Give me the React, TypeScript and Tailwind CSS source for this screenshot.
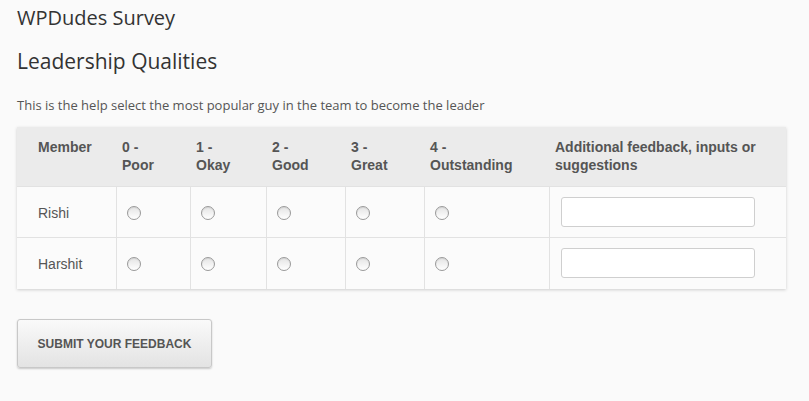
const members = ["Rishi", "Harshit"];
const ratings = [
  { n: "0 -", label: "Poor", w: "w-[74px]" },
  { n: "1 -", label: "Okay", w: "w-[76px]" },
  { n: "2 -", label: "Good", w: "w-[79px]" },
  { n: "3 -", label: "Great", w: "w-[79px]" },
  { n: "4 -", label: "Outstanding", w: "w-[125px]" },
];

function Radio() {
  return (
    <span className="block h-[14px] w-[14px] rounded-full border border-[#9a9a9a] bg-gradient-to-b from-[#e4e4e4] to-white shadow-[inset_0_1px_1px_rgba(0,0,0,0.08)]" />
  );
}

export default function App() {
  return (
    <div className="min-h-[401px] w-[809px] bg-[#fafafa] px-[17px] pt-[4px] font-['Open_Sans',sans-serif]">
      <h1 className="text-[20px] leading-[28px] text-[#333]">WPDudes Survey</h1>
      <h2 className="mt-[14px] text-[21px] leading-[30px] text-[#333]">Leadership Qualities</h2>
      <p className="mt-[20px] text-[13px] leading-[18px] text-[#555]">
        This is the help select the most popular guy in the team to become the leader
      </p>

      <div className="mt-[13px] w-[769px] shadow-[0_1px_3px_rgba(0,0,0,0.18)]">
        <table className="w-full border-collapse font-['Liberation_Sans',Arial,sans-serif] text-[14px] text-[#555]">
          <thead>
            <tr className="h-[59px] bg-[#ebebeb] align-top">
              <th className="w-[99px] pl-[21px] pt-[11px] text-left font-bold leading-[18px]">Member</th>
              {ratings.map((r) => (
                <th key={r.n} className={`${r.w} pl-[6px] pt-[11px] text-left font-bold leading-[18px]`}>
                  {r.n}
                  <br />
                  {r.label}
                </th>
              ))}
              <th className="pl-[6px] pr-[20px] pt-[11px] text-left font-bold leading-[18px]">
                Additional feedback, inputs or suggestions
              </th>
            </tr>
          </thead>
          <tbody>
            {members.map((m, i) => (
              <tr key={m} className={`bg-[#fbfbfb] ${i === 0 ? "h-[51px]" : "h-[52px]"}`}>
                <td className="border-t border-[#e2e2e2] pl-[21px] pt-[3px]">{m}</td>
                {ratings.map((r) => (
                  <td key={r.n} className="border-l border-t border-[#e2e2e2] pl-[10px] pt-[2px]">
                    <Radio />
                  </td>
                ))}
                <td className="border-l border-t border-[#e2e2e2] pl-[11px]">
                  <input
                    type="text"
                    className="block h-[30px] w-[194px] rounded-[3px] border border-[#cfcfcf] bg-white"
                  />
                </td>
              </tr>
            ))}
          </tbody>
        </table>
      </div>

      <button className="mt-[30px] h-[49px] w-[195px] rounded-[3px] border border-[#c8c8c8] bg-gradient-to-b from-[#fafafa] to-[#e3e3e3] font-['Liberation_Sans',Arial,sans-serif] text-[12px] font-bold text-[#555] shadow-[0_1px_2px_rgba(0,0,0,0.2)]">
        SUBMIT YOUR FEEDBACK
      </button>
    </div>
  );
}
